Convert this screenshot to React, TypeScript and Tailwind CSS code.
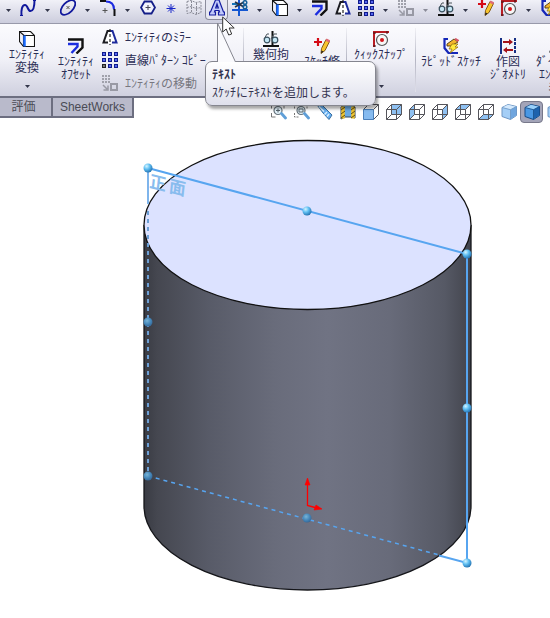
import type { ReactNode } from "react";
import clsx from "clsx";

function Icon({ children }: { children: ReactNode }) {
  return (
    <svg viewBox="0 0 16 16" fill="none" className="block size-4 shrink-0" aria-hidden="true">
      {children}
    </svg>
  );
}

const SplineIcon = () => (
  <Icon>
    <path d="M1.500 15.500C1 10 2 5 5 5s2.500 6 5.500 6 4-5 4-11" stroke="#10189c" strokeWidth="2" />
    <path d="M0 15.500h3M13 .5h3" stroke="#10189c" />
  </Icon>
);

const EllipseIcon = () => (
  <Icon>
    <ellipse cx="8" cy="7.500" rx="9" ry="5" transform="rotate(-45 8 7.500)" stroke="#10189c" strokeWidth="1.800" />
    <path d="M6.500 6l3 3m0-3l-3 3" stroke="#555" />
  </Icon>
);

const ArcIcon = () => (
  <Icon>
    <path d="M0 .5h6" stroke="#111" strokeWidth="3" />
    <path d="M6 1.500c5 0 8 3 8 8" stroke="#1c2ae0" strokeWidth="2" />
    <path d="M14.500 9v7" stroke="#111" strokeWidth="2" />
    <path d="M2.500 10.500h5M5 8v5" stroke="#555" />
  </Icon>
);

const HexagonIcon = () => (
  <Icon>
    <path d="M4.500 1.500h7l3.500 6-3.500 6h-7L1 7.500z" fill="#f2f3fc" stroke="#141e88" strokeWidth="1.800" />
    <path d="M5.500 7.500h5M8 5v5" stroke="#445" />
  </Icon>
);

const PointIcon = () => (
  <Icon>
    <path d="M3.500 8.500h9M8 4v9M5 5.500l6 6m0-6l-6 6" stroke="#1826c8" />
  </Icon>
);

const HatchIcon = () => (
  <Icon>
    <path d="M1 1.500l4-1 5 2 5-1v11l-5 2-5-2-4 1zM5.500 1v12M10.500 3v11M1 7.500l4-1 5 2 5-1" stroke="#8b8c98" strokeDasharray="2 1" />
  </Icon>
);

const TextIcon = () => (
  <Icon>
    <path
      d="M6.500 0h3.500l4.500 12h1v3H9.500v-3h1l-.5-1.500H6L5.500 12h1v3H.5v-3h1zM8 4L6.700 8h2.600z"
      fill="#c3cbfb"
      stroke="#131ca0"
      strokeWidth="1.200"
    />
  </Icon>
);

const TrimIcon = () => (
  <Icon>
    <path d="M0 10h16M7 0v16" stroke="#1457d2" strokeWidth="2" />
    <path d="M0 4h6" stroke="#1674b8" strokeWidth="2" />
    <path d="M3 2l9 5M3 7l9-5" stroke="#263449" strokeWidth="1.800" />
    <circle cx="13" cy="2.500" r="1.800" stroke="#16609a" strokeWidth="1.500" />
    <circle cx="13" cy="7" r="1.800" stroke="#16609a" strokeWidth="1.500" />
  </Icon>
);

const ConvertIcon = () => (
  <Icon>
    <path d="M.5.5h11l4 4v11h-11l-4-5z" fill="#fff" />
    <path d="M1 1h5l3 4H5v10l-4-4z" fill="#f0f1fa" />
    <path d="M.5.5h11l4 4v11h-11l-4-5zM.5.5l4.500 4h10.500M4.500 4.500v11" stroke="#161616" strokeWidth="1.100" />
    <path d="M5.500 4.500v11" stroke="#1b6bff" strokeWidth="2.500" />
  </Icon>
);

const OffsetIcon = () => (
  <Icon>
    <path d="M0 1.500h14.500v8l-6 6" stroke="#111" strokeWidth="2.400" />
    <path d="M0 6h9.500v2.500L3.500 15" stroke="#1c2ee0" strokeWidth="2.400" />
  </Icon>
);

const MirrorIcon = () => (
  <Icon>
    <path d="M5 2h6l4.500 12H.5z" fill="#fff" />
    <path d="M8 2H5.500L1.500 13.500H6" stroke="#1c1c22" strokeWidth="2" />
    <path d="M8 2h2.500l4 11.500H10" stroke="#1d2a9c" strokeWidth="2" />
    <path d="M8 0v16" stroke="#222" strokeWidth="1.200" strokeDasharray="3 2" />
  </Icon>
);

const PatternIcon = () => (
  <Icon>
    {[0, 6, 12].map((y) =>
      [0, 6, 12].map((x) => (
        <g key={`${x}-${y}`}>
          <rect x={x} y={y} width="4" height="4" fill={x === 0 && y === 12 ? "#222" : "#0f1a8c"} />
          <rect x={x + 1} y={y + 1} width="2" height="2" fill={x === 0 && y === 12 ? "#777" : "#5566ee"} />
        </g>
      )),
    )}
  </Icon>
);

const MoveIcon = () => (
  <Icon>
    <path d="M0 1h8M0 4h8M0 7h8" stroke="#a0a1ab" strokeWidth="2" strokeDasharray="2 1" />
    <path d="M1 10l4 4M6 10.500V15H1.500" stroke="#9899a4" strokeWidth="1.500" />
    <rect x="9" y="9" width="6" height="6" stroke="#9899a4" strokeWidth="2" />
  </Icon>
);

const RelationIcon = () => (
  <Icon>
    <path d="M0 15h16M9.500 0v15" stroke="#111" strokeWidth="2" />
    <path d="M1 8l3-5h2M8 8l3-5h3" stroke="#4c565d" />
    <circle cx="4" cy="9" r="2.800" fill="#c6e7f5" stroke="#39505e" strokeWidth="1.200" />
    <circle cx="12" cy="9" r="2.800" fill="#c6e7f5" stroke="#39505e" strokeWidth="1.200" />
  </Icon>
);

const RepairIcon = () => (
  <Icon>
    <path d="M0 4h8M4 0v8" stroke="#d40b16" strokeWidth="2.200" />
    <path d="M12 1.500l3.500 2-4.500 9-4 3 .5-5z" fill="#f7c52e" stroke="#7a4d09" strokeWidth=".9" />
    <path d="M12 1.500l3.500 2" stroke="#df6b78" strokeWidth="2.500" />
    <path d="M7 15.500l.5-3 2 1z" fill="#222" />
  </Icon>
);

const SnapIcon = () => (
  <Icon>
    <path d="M1 16V1h15" stroke="#b81c22" strokeWidth="2" />
    <path d="M0 2h3M0 15h3M14 0v3" stroke="#3a1012" />
    <circle cx="9" cy="9" r="5.500" fill="#f7f7f7" stroke="#555" strokeWidth="1.200" />
    <circle cx="9" cy="9" r="2" fill="#d3151c" />
  </Icon>
);

const RapidIcon = () => (
  <Icon>
    <path d="M5 1H1.500v9l4 5H15" stroke="#1527b8" strokeWidth="2.200" />
    <path d="M4 6l7-5 4 3-7 4H4z" fill="#f3b52c" stroke="#4d360e" strokeWidth=".9" />
    <path d="M12 .8l3.500 2.200" stroke="#d55867" strokeWidth="2.200" />
    <path d="M9 6h6l-3 3h3l-8 6 2-4H6z" fill="#ffe83b" stroke="#9b7412" strokeWidth=".8" />
  </Icon>
);

const ConstructionIcon = () => (
  <Icon>
    <path d="M1 0v16" stroke="#162f84" strokeWidth="2" />
    <path d="M15 0v16" stroke="#162f84" strokeWidth="2" strokeDasharray="3 1" />
    <path d="M3 4h8M6 12h7" stroke="#a51219" strokeWidth="2" />
    <path d="M9 1l4 3-4 3zM7 9l-4 3 4 3z" fill="#a51219" />
  </Icon>
);

const ZoomIcon = ({ area }: { area?: boolean }) => (
  <Icon>
    <path d="M.5 4.500v-4h4M9 .5h4v4M.5 9v4h4" stroke="#777" strokeDasharray={area ? "2 1" : undefined} />
    <circle cx="7" cy="6.500" r="4" fill="#e4f3fb" stroke="#67737c" strokeWidth="1.200" />
    <path d={area ? "M5 5h4v3H5z" : "M5 6.500h4M7 4.500v4"} stroke="#56636b" />
    <path d="M10.500 9.500l4 4.500" stroke="#5f9fd8" strokeWidth="2.800" strokeLinecap="round" />
  </Icon>
);

const PreviousViewIcon = () => (
  <Icon>
    <path d="M.5 1.500l4-1L9 5l6 6-3 4.500L6 9z" fill="#65aef0" stroke="#3a6fa0" />
    <path d="M2 2.500l5 5M10 8l-2.500 2.500M12 10l-2 2.500" stroke="#d8efff" strokeWidth="1.500" />
  </Icon>
);

const SectionIcon = () => (
  <Icon>
    <path d="M1 3l4-2h6l4 2v11l-4-1H5l-4 2z" fill="#6ba9e2" stroke="#36475a" />
    <path d="M3 2.500v12M13 2.500v12" stroke="#f4c52c" strokeWidth="3.500" />
    <path d="M1 6l4-3M1 10l4-3M1 14l4-3M11 6l4-3M11 10l4-3M11 14l4-3" stroke="#5a4b18" />
  </Icon>
);

// Wireframe cube with one face tinted, used for the standard views.
const CubeViewIcon = ({ face }: { face: string }) => (
  <Icon>
    <path d={face} fill="#8fc1f2" />
    <path
      d="M.5 5.500h10v10H.5zM5.500.5h10v10h-10zM.5 5.500l5-5M10.500 5.500l5-5M.5 15.500l5-5M10.500 15.500l5-5"
      stroke="#55555b"
    />
  </Icon>
);

const FrontViewIcon = () => (
  <Icon>
    <path d="M.5 5.500l5-5h10v10l-5 5z" fill="#fff" stroke="#55555b" />
    <path d="M.5 5.500h10v10H.5z" fill="#86bbf0" stroke="#4b80bb" />
    <path d="M10.500 5.500l5-5" stroke="#55555b" />
  </Icon>
);

const SolidCubeIcon = ({ dark }: { dark?: boolean }) => (
  <Icon>
    <path d="M7 .5l8.500 2v9l-6 4-8.500-3v-9z" fill={dark ? "#4a98e4" : "#a4cef6"} stroke={dark ? "#174b87" : "#6c95c3"} />
    <path d="M7 .8l8 1.900-5.500 3L1.500 3.500z" fill={dark ? "#9ad1fb" : "#d3e9fd"} />
    <path d="M9.500 5.700l5.700-3v8.600l-5.700 4z" fill={dark ? "#1d62ad" : "#6fa5de"} />
    <path d="M1 3.500l8.500 2.200 6-3.200M9.500 5.700v9.800" stroke={dark ? "#1c548f" : "#6f9ac6"} strokeWidth=".9" />
  </Icon>
);

function Caret({ muted }: { muted?: boolean }) {
  return (
    <svg viewBox="0 0 5 3" className="h-[3px] w-[5px]" aria-hidden="true">
      <path d="M0 0h5L2.500 3z" fill={muted ? "#8a8b98" : "#33364a"} />
    </svg>
  );
}

type Tool = { label: string; icon?: ReactNode; muted?: boolean; active?: boolean };

const quickTools: Tool[] = [
  { label: "直線" },
  { label: "スプライン", icon: <SplineIcon /> },
  { label: "スプラインの種類" },
  { label: "楕円", icon: <EllipseIcon /> },
  { label: "楕円の種類" },
  { label: "フィレット", icon: <ArcIcon /> },
  { label: "フィレットの種類" },
  { label: "多角形", icon: <HexagonIcon /> },
  { label: "点", icon: <PointIcon /> },
  { label: "平面", icon: <HatchIcon /> },
  { label: "テキスト", icon: <TextIcon />, active: true },
  { label: "トリム", icon: <TrimIcon /> },
  { label: "トリムの種類" },
  { label: "変換", icon: <ConvertIcon /> },
  { label: "変換の種類" },
  { label: "オフセット", icon: <OffsetIcon /> },
  { label: "ミラー", icon: <MirrorIcon /> },
  { label: "パターン", icon: <PatternIcon /> },
  { label: "パターンの種類" },
  { label: "移動", icon: <MoveIcon /> },
  { label: "移動の種類", muted: true },
  { label: "拘束", icon: <RelationIcon /> },
  { label: "拘束の種類" },
  { label: "修復", icon: <RepairIcon /> },
  { label: "スナップ", icon: <SnapIcon /> },
  { label: "スナップの種類" },
  { label: "ラピッド", icon: <RapidIcon /> },
];

const viewTools: Tool[] = [
  { label: "全体表示", icon: <ZoomIcon /> },
  { label: "一部拡大", icon: <ZoomIcon area /> },
  { label: "前の表示", icon: <PreviousViewIcon /> },
  { label: "断面表示", icon: <SectionIcon /> },
  { label: "正面", icon: <FrontViewIcon /> },
  { label: "背面", icon: <CubeViewIcon face="M5.500.5h10v10h-10z" /> },
  { label: "左側面", icon: <CubeViewIcon face="M.5 5.500l5-5v10l-5 5z" /> },
  { label: "右側面", icon: <CubeViewIcon face="M10.500 5.500l5-5v10l-5 5z" /> },
  { label: "平面", icon: <CubeViewIcon face="M.5 5.500l5-5h10l-5 5z" /> },
  { label: "底面", icon: <CubeViewIcon face="M.5 15.500l5-5h10l-5 5z" /> },
  { label: "等角投影", icon: <SolidCubeIcon /> },
  { label: "エッジシェイディング", icon: <SolidCubeIcon dark />, active: true },
  { label: "シェイディング", icon: <SolidCubeIcon /> },
];

type RibbonButtonProps = {
  icon: ReactNode;
  lines: string[];
  width: string;
  low?: boolean;
  caret?: boolean;
};

function RibbonButton({ icon, lines, width, low, caret }: RibbonButtonProps) {
  return (
    <button
      type="button"
      className={clsx("flex shrink-0 flex-col items-center", low ? "pt-[14px]" : "pt-[7px]", width)}
    >
      {icon}
      {lines.map((line) => (
        <span key={line} className="whitespace-nowrap">
          {line}
        </span>
      ))}
      {caret && (
        <span className="mt-auto mb-2">
          <Caret />
        </span>
      )}
    </button>
  );
}

const Separator = () => (
  <div className="my-1 w-px shrink-0 bg-linear-to-b from-[#f0f0f5] via-[#b4b5c3] to-[#e0e0ea]" />
);

function QuickToolbar() {
  return (
    <div className="flex h-[23px] overflow-hidden bg-linear-to-b from-[#f1f1f8] to-[#cccddd]">
      {quickTools.map(({ label, icon, muted, active }, i) =>
        icon ? (
          <button
            key={label}
            type="button"
            aria-label={label}
            className={clsx(
              "flex h-5 w-[23px] shrink-0 justify-center",
              active && "rounded-b border border-t-0 border-[#8b8c9c] bg-[#e6e7f1]",
            )}
          >
            {icon}
          </button>
        ) : (
          <button
            key={label}
            type="button"
            aria-label={label}
            className={clsx("flex h-5 shrink-0 items-center justify-center", i === 0 ? "w-4" : "w-[17px]")}
          >
            <Caret muted={muted} />
          </button>
        ),
      )}
    </div>
  );
}

function Ribbon() {
  return (
    <div className="flex h-[75px] items-stretch overflow-hidden border-t border-b-2 border-t-[#9899aa] border-b-[#6c6e80] bg-linear-to-b from-[#fbfbfe] via-[#f0f0f7] to-[#cfd0df] text-[12px] leading-[13px] text-[#2b2d55]">
      <RibbonButton icon={<ConvertIcon />} lines={["ｴﾝﾃｨﾃｨ", "変換"]} width="w-[54px]" caret />
      <RibbonButton icon={<OffsetIcon />} lines={["ｴﾝﾃｨﾃｨ", "ｵﾌｾｯﾄ"]} width="w-[44px]" low />
      <div className="flex w-[145px] shrink-0 flex-col pt-px pl-1">
        <button type="button" className="flex h-[23px] items-center gap-[7px]">
          <MirrorIcon />
          ｴﾝﾃｨﾃｨのﾐﾗｰ
        </button>
        <button type="button" className="flex h-[23px] items-center gap-[7px]">
          <PatternIcon />
          直線ﾊﾟﾀｰﾝ ｺﾋﾟｰ
        </button>
        <button type="button" disabled className="flex h-[23px] items-center gap-[7px] text-[#77777f]">
          <MoveIcon />
          ｴﾝﾃｨﾃｨの移動
        </button>
      </div>
      <Separator />
      <RibbonButton icon={<RelationIcon />} lines={["幾何拘"]} width="w-[54px]" />
      <RibbonButton icon={<RepairIcon />} lines={["ｽｹｯﾁ修"]} width="w-[48px]" low />
      <Separator />
      <RibbonButton icon={<SnapIcon />} lines={["ｸｨｯｸｽﾅｯﾌﾟ"]} width="w-[68px]" caret />
      <Separator />
      <RibbonButton icon={<RapidIcon />} lines={["ﾗﾋﾟｯﾄﾞｽｹｯﾁ"]} width="w-[70px]" low />
      <RibbonButton icon={<ConstructionIcon />} lines={["作図", "ｼﾞｵﾒﾄﾘ"]} width="w-[44px]" low />
      <RibbonButton icon={<MirrorIcon />} lines={["ﾀﾞｲﾅﾐｯｸ", "ｴﾝﾃｨﾃｨ", "ﾐﾗｰ"]} width="w-[54px]" low />
    </div>
  );
}

function TextTooltip() {
  return (
    <div
      role="tooltip"
      className="absolute top-[61px] left-[205px] h-[45px] w-[171px] rounded-[7px] border border-[#85868f] bg-linear-to-b from-white to-[#dfe0ec] pt-[5px] pl-[6px] text-[12px] text-[#33334f] shadow-[2px_3px_3px_rgba(0,0,0,0.35)]"
    >
      <svg viewBox="0 0 22 42" className="absolute -top-[40px] left-[11px] h-[42px] w-[22px]" aria-hidden="true">
        <path d="M.5 40V1l18 39z" fill="#fafafd" />
        <path d="M.5 40V1l18 39" stroke="#85868f" fill="none" />
      </svg>
      <p className="leading-[13px] font-bold">ﾃｷｽﾄ</p>
      <p className="mt-1 leading-[16px] whitespace-nowrap">ｽｹｯﾁにﾃｷｽﾄを追加します。</p>
    </div>
  );
}

function Pointer() {
  return (
    <svg viewBox="0 0 13 20" className="absolute top-[16px] left-[222px] h-5 w-[13px]" aria-hidden="true">
      <path d="M.7 1v15l3.500-3 2.500 6 3-1-2.500-6h5z" fill="#fff" stroke="#333" />
    </svg>
  );
}

const handles = [
  { x: 148, y: 168 },
  { x: 307, y: 211 },
  { x: 467, y: 254 },
  { x: 467, y: 408 },
  { x: 467, y: 563 },
  { x: 148, y: 322, hidden: true },
  { x: 148, y: 476, hidden: true },
  { x: 307, y: 518, hidden: true },
];

function Viewport() {
  return (
    <svg viewBox="0 124 550 494" className="block w-full" role="img" aria-label="円柱モデル">
      <defs>
        <linearGradient id="side">
          <stop offset="0" stopColor="#393b43" />
          <stop offset="0.04" stopColor="#454750" />
          <stop offset="0.2" stopColor="#585b68" />
          <stop offset="0.4" stopColor="#696c7b" />
          <stop offset="0.56" stopColor="#707383" />
          <stop offset="0.75" stopColor="#686b7a" />
          <stop offset="0.92" stopColor="#565965" />
          <stop offset="1" stopColor="#42444d" />
        </linearGradient>
        <radialGradient id="ball" cx="0.35" cy="0.3" r="0.75">
          <stop offset="0" stopColor="#d6f5ff" />
          <stop offset="0.45" stopColor="#61c0f3" />
          <stop offset="1" stopColor="#216fae" />
        </radialGradient>
        <radialGradient id="ballHidden" cx="0.4" cy="0.35" r="0.75">
          <stop offset="0" stopColor="#79b4d6" />
          <stop offset="0.5" stopColor="#4789bb" />
          <stop offset="1" stopColor="#315f8e" />
        </radialGradient>
      </defs>

      <path d="M144 225V506A163.500 84 0 0 0 471 506V225" fill="url(#side)" stroke="#15161a" strokeWidth="1.300" />
      <ellipse cx="307.500" cy="225" rx="163.500" ry="84.500" fill="#dce2ff" stroke="#111" strokeWidth="1.300" />

      <g stroke="#57a5f0" strokeWidth="2">
        <path d="M148 168L467 254V563L439 555.500" fill="none" />
        <path d="M148 168v36" stroke="#7fb5ec" />
        <path d="M148 211v265" strokeDasharray="4 4" stroke="#6c9fd6" />
        <path d="M148 476L439 555" strokeDasharray="4 4" strokeWidth="1.500" />
      </g>

      <text transform="translate(149 187) rotate(14) skewX(8)" fontSize="17" fontWeight="700" fill="#88bcee">
        正<tspan dx="3">面</tspan>
      </text>

      <g stroke="#f00" fill="#f00">
        <path d="M307.500 484V505.500L315 507.500" fill="none" strokeWidth="1.300" />
        <path d="M307.500 478l2.500 7h-5zM322 509l-8 1 2-5z" strokeWidth=".6" />
      </g>

      {handles.map(({ x, y, hidden }) => (
        <circle key={`${x}-${y}`} cx={x} cy={y} r="4.500" fill={hidden ? "url(#ballHidden)" : "url(#ball)"} />
      ))}
    </svg>
  );
}

export default function App() {
  return (
    <main className="relative min-h-screen overflow-hidden bg-white font-['Noto_Sans_CJK_JP',sans-serif]">
      <QuickToolbar />
      <Ribbon />

      <div className="flex h-[26px] items-start justify-between">
        <nav className="flex h-[20px] font-['Liberation_Sans','Noto_Sans_CJK_JP',sans-serif] text-[12px] leading-[18px] text-[#4a4b55]">
          <a href="#evaluate" className="w-[53px] border-r-2 border-b-2 border-[#6c6e80] bg-[#b9bacb] pr-1 text-center">
            評価
          </a>
          <a href="#sheetworks" className="w-[81px] border-r-2 border-b-2 border-[#6c6e80] bg-[#b9bacb] text-center">
            SheetWorks
          </a>
        </nav>
        <div className="ml-[133px] flex min-w-0 flex-1 overflow-hidden pt-[3px]">
          {viewTools.map(({ label, icon, active }) => (
            <button
              key={label}
              type="button"
              aria-label={label}
              className={clsx(
                "flex h-[22px] w-[23px] shrink-0 items-center justify-center",
                active && "rounded border border-[#77788a] bg-[#a3a4b8]",
              )}
            >
              {icon}
            </button>
          ))}
        </div>
      </div>

      <Viewport />
      <TextTooltip />
      <Pointer />
    </main>
  );
}
